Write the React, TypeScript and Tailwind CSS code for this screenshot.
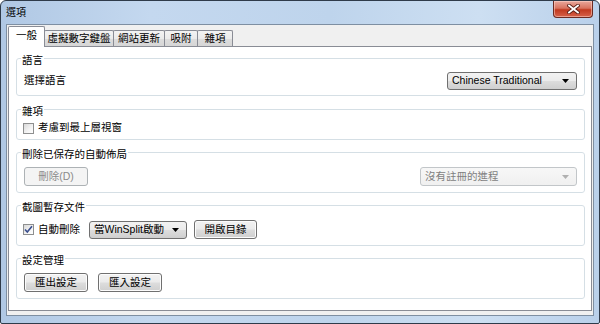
import React from 'react';

// Win7 style button
const Btn = ({ children, disabled, className = '' }: any) => (
  <div
    className={`h-[19px] flex items-center justify-center rounded-[3px] border ${
      disabled
        ? 'border-[#adb2b5] bg-[#f4f4f4] text-[#8a8a8a]'
        : 'border-[#707070] bg-[linear-gradient(180deg,#f2f2f2_0%,#ebebeb_48%,#dddddd_52%,#cfcfcf_100%)] text-black shadow-[inset_0_0_0_1px_#fcfcfc]'
    } ${className}`}
  >
    {children}
  </div>
);

const Combo = ({ value, disabled, className = '' }: any) => (
  <div
    className={`h-[18px] flex items-center rounded-[3px] border pl-[4px] pr-[7px] ${
      disabled
        ? 'border-[#c2c6c9] bg-[linear-gradient(180deg,#f7f7f7_0%,#f0f0f0_100%)] text-[#7f7f7f]'
        : 'border-[#707070] bg-[linear-gradient(180deg,#f2f2f2_0%,#ebebeb_48%,#dddddd_52%,#cfcfcf_100%)] text-black'
    } ${className}`}
  >
    <span className="flex-1 whitespace-nowrap">{value}</span>
    <svg width="7" height="4" viewBox="0 0 7 4">
      <path d="M0 0h7L3.5 4z" fill={disabled ? '#b0b0b0' : '#000'} />
    </svg>
  </div>
);

const Check = ({ checked }: { checked?: boolean }) => (
  <div className="w-[11px] h-[11px] border border-[#8e8f8f] bg-[linear-gradient(135deg,#d8d8d8_0%,#f4f4f4_60%,#ffffff_100%)] flex items-center justify-center shrink-0">
    {checked && (
      <svg width="9" height="9" viewBox="0 0 9 9">
        <path d="M1 4.5l2.3 2.6L8 1.2" stroke="#3b4f8e" strokeWidth="1.6" fill="none" />
      </svg>
    )}
  </div>
);

const Group = ({ title, children, className = '' }: any) => (
  <fieldset className={`border border-[#d5dfe5] rounded-[3px] px-[7px] ${className}`}>
    <legend className="-ml-[3px] px-[1px] pt-[4px] leading-[14px] text-black">{title}</legend>
    {children}
  </fieldset>
);

const tabs = [
  { label: '虛擬數字鍵盤', w: 'w-[70px]' },
  { label: '網站更新', w: 'w-[52px]' },
  { label: '吸附', w: 'w-[34px]' },
  { label: '雜項', w: 'w-[36px]' },
];

export default function App() {
  return (
    <div className="w-[600px] h-[324px] bg-white font-[family-name:'Liberation_Sans','Noto_Sans_CJK_TC',sans-serif] text-[10.5px] text-black">
      <div className="w-full h-full flex flex-col border border-[#2f3b4a] rounded-t-[6px] rounded-b-[2px] overflow-hidden bg-[linear-gradient(90deg,#b0c8e4_0%,#c4d8ef_25%,#bed4ec_55%,#cddff2_80%,#b9d0ea_100%)]">
        {/* title bar */}
        <div className="h-[23px] flex items-start">
          <span className="pl-[5px] pt-[6px] text-[10px] leading-[12px]">選項</span>
          <div className="ml-auto mr-[6px] w-[40px] h-[17px] rounded-b-[4px] border border-t-0 border-[#6b2a22] bg-[linear-gradient(180deg,#e9a89c_0%,#d8735f_45%,#c1391f_55%,#d6614a_100%)] flex items-center justify-center shadow-[inset_0_0_0_1px_rgba(255,220,210,0.5)]">
            <svg width="13" height="10" viewBox="0 0 13 10">
              <path d="M2 1.5l9 7M11 1.5l-9 7" stroke="#5a1f17" strokeWidth="3.6" strokeLinecap="square" />
              <path d="M2 1.5l9 7M11 1.5l-9 7" stroke="#ffffff" strokeWidth="1.8" strokeLinecap="square" />
            </svg>
          </div>
        </div>

        {/* client area */}
        <div className="flex-1 mx-[5px] mb-[7px] border border-[#7e8fa2] bg-[#f0f0f0] flex flex-col pt-[1px] px-[1px] pb-[4px]">
          {/* tabs */}
          <div className="h-[20px] flex items-end">
            <div className="relative z-10 w-[37px] h-[21px] -mb-[1px] border border-b-0 border-[#898c95] rounded-t-[2px] bg-white flex items-center justify-center pb-[2px]">
              一般
            </div>
            {tabs.map((t) => (
              <div
                key={t.label}
                className={`${t.w} h-[16px] -ml-[1px] border border-b-0 border-[#898c95] rounded-t-[2px] bg-[linear-gradient(180deg,#f3f3f3_0%,#ebebeb_50%,#dddddd_51%,#d6d6d6_100%)] flex items-center justify-center whitespace-nowrap`}
              >
                {t.label}
              </div>
            ))}
          </div>

          {/* panel */}
          <div className="flex-1 border border-[#898c95] bg-white pt-[2px] pl-[7px] pr-[6px]">
            <Group title="語言" className="pb-[5px]">
              <div className="mt-[5px] h-[18px] flex items-center justify-between">
                <span>選擇語言</span>
                <Combo value="Chinese Traditional" className="w-[130px]" />
              </div>
            </Group>

            <Group title="雜項" className="mt-[4px] pb-[4px]">
              <div className="mt-[3px] h-[14px] flex items-center gap-[4px] -ml-[1px]">
                <Check />
                <span>考慮到最上層視窗</span>
              </div>
            </Group>

            <Group title="刪除已保存的自動佈局" className="mt-[3px] pb-[6px]">
              <div className="mt-[6px] flex items-center justify-between">
                <Btn disabled className="w-[64px]">刪除(D)</Btn>
                <Combo disabled value="沒有註冊的進程" className="w-[157px] h-[19px] pl-[3px]" />
              </div>
            </Group>

            <Group title="截圖暫存文件" className="mt-[3px] pb-[6px]">
              <div className="mt-[6px] h-[19px] flex items-center -ml-[1px]">
                <Check checked />
                <span className="ml-[4px]">自動刪除</span>
                <Combo value="當WinSplit啟動" className="ml-[9px] w-[98px] pl-[3px]" />
                <Btn className="ml-[7px] w-[63px]">開啟目錄</Btn>
              </div>
            </Group>

            <Group title="設定管理" className="mt-[3px] pb-[6px]">
              <div className="mt-[6px] flex items-center">
                <Btn className="w-[64px]">匯出設定</Btn>
                <Btn className="ml-[10px] w-[64px]">匯入設定</Btn>
              </div>
            </Group>
          </div>
        </div>
      </div>
    </div>
  );
}
